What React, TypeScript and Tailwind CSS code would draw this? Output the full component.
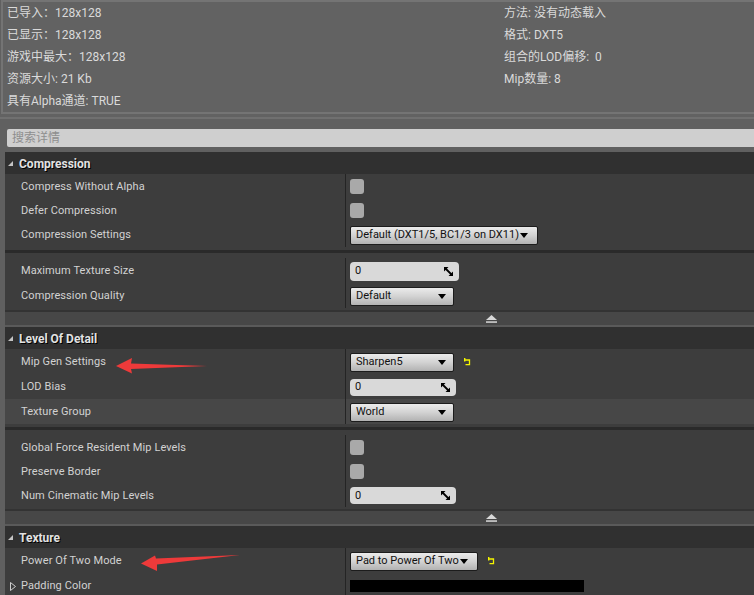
import React from "react";

const FONT = "font-['Roboto','Noto_Sans_CJK_SC',sans-serif]";

function HeaderTri() {
  return (
    <svg width="5" height="5" viewBox="0 0 5 5">
      <polygon points="5,0 5,5 0,5" fill="#c4c4c4" />
    </svg>
  );
}

function ComboArrow() {
  return (
    <svg width="8" height="5" viewBox="0 0 8 5">
      <polygon points="0,0 8,0 4,5" fill="#000" />
    </svg>
  );
}

function SpinIcon() {
  return (
    <svg width="9" height="9" viewBox="0 0 9 9">
      <path d="M0 0H4.5L0 4.5Z M9 9H4.5L9 4.5Z" fill="#000" />
      <path d="M1 1L8 8" stroke="#000" strokeWidth="1.8" />
    </svg>
  );
}

function ResetArrow() {
  return (
    <svg width="8" height="8" viewBox="0 0 8 8">
      <path d="M1.5 2H6.5V6.6H2.5" stroke="#f4f400" strokeWidth="1.3" fill="none" />
      <path d="M1 0V3.5H2.4V0Z" fill="#f4f400" />
    </svg>
  );
}

function Checkbox() {
  return <div className="h-[15px] w-[14px] rounded-[3px] bg-[#a9a9a9]" />;
}

function Combo({ text, w, fill }: { text: string; w: string; fill?: boolean }) {
  return (
    <div
      className={`flex h-[19px] items-center rounded-[2px] border border-[#1c1c1c] bg-linear-to-b from-[#ebebeb] via-[#d2d2d2] to-[#b2b2b2] pl-[5px] text-[11px] text-[#111] ${
        fill ? "gap-[1px] pr-[3px]" : "justify-between pr-[7px]"
      } ${w}`}
    >
      <span className="whitespace-nowrap pt-[1px]">{text}</span>
      <ComboArrow />
    </div>
  );
}

function NumBox({ w, h }: { w: string; h: string }) {
  return (
    <div className={`flex items-center justify-between rounded-[4px] bg-[#d9d9d9] pl-[5px] pr-[6px] text-[11px] text-[#111] ${w} ${h}`}>
      <span className="pt-[1px]">0</span>
      <SpinIcon />
    </div>
  );
}

function Row({
  label,
  h = "h-[24px]",
  hover,
  expand,
  children,
}: {
  label: string;
  h?: string;
  hover?: boolean;
  expand?: boolean;
  children?: React.ReactNode;
}) {
  return (
    <div className={`flex ${h} ${hover ? "bg-[#474747]" : ""}`}>
      <div className="relative flex w-[340px] items-center pl-[16px] pt-[2px] text-[11px] tracking-[0.1px] text-[#d2d2d2]">
        {expand && (
          <svg className="absolute left-[5px] top-[9px]" width="6" height="9" viewBox="0 0 6 9">
            <polygon points="0.5,0.5 5.5,4.5 0.5,8.5" fill="none" stroke="#cfcfcf" strokeWidth="1" />
          </svg>
        )}
        {label}
      </div>
      <div className="flex flex-1 items-center gap-[9px] border-l border-[#242424] pl-[4px] pt-[1px]">{children}</div>
    </div>
  );
}

function Header({ title }: { title: string }) {
  return (
    <div className="flex h-[22px] items-center gap-[6px] bg-[#303030] pl-[3px]">
      <HeaderTri />
      <span className="pt-[1px] text-[12px] font-bold text-[#e2e2e2] [text-shadow:1px_1px_0_#000]">{title}</span>
    </div>
  );
}

function GroupGap() {
  return (
    <div className="pt-[3px] pb-[5px]">
      <div className="h-[3px] bg-[#2a2a2a]" />
    </div>
  );
}

function Expander() {
  return (
    <div className="pt-[2px]">
      <div className="h-[2px] bg-[#333]" />
      <div className="flex h-[13px] items-center justify-center bg-[#474747]">
        <svg width="11" height="8" viewBox="0 0 11 8">
          <polygon points="5.5,0 11,5 0,5" fill="#d8d8d8" />
          <rect x="0" y="6.3" width="11" height="1.5" fill="#d8d8d8" />
        </svg>
      </div>
      <div className="h-[2px] bg-[#5a5a5a]" />
    </div>
  );
}

export default function App() {
  const leftInfo = ["已导入：128x128", "已显示：128x128", "游戏中最大：128x128", "资源大小: 21 Kb", "具有Alpha通道: TRUE"];
  const rightInfo = ["方法: 没有动态载入", "格式: DXT5", "组合的LOD偏移:  0", "Mip数量: 8"];

  return (
    <div className={`relative h-[595px] w-[754px] overflow-hidden bg-[#606060] ${FONT}`}>
      <div className="w-[977px]">
        {/* asset info */}
        <div className="ml-[1px] grid grid-cols-[497px_1fr] border-t-2 border-b-2 border-l-2 border-[#747474] bg-[#626262] pl-[4px] text-[12px] leading-[22px] text-[#dadada]">
          <div>
            {leftInfo.map((t) => (
              <div key={t}>{t}</div>
            ))}
          </div>
          <div>
            {rightInfo.map((t) => (
              <div key={t} className="whitespace-pre">{t}</div>
            ))}
          </div>
        </div>

        <div className="h-[3px] bg-[#626262]" />

        <div className="border-t-2 border-[#707070] pt-[10px]">
          <div className="ml-[7px] flex h-[18px] items-center rounded-[2px] bg-[#cfcfcf] pl-[5px] text-[12px] text-[#8e8e8e]">
            搜索详情
          </div>

          <div className="ml-[5px] mt-[5px] bg-[#3d3d3d]">
            <Header title="Compression" />
            <Row label="Compress Without Alpha">
              <Checkbox />
            </Row>
            <Row label="Defer Compression">
              <Checkbox />
            </Row>
            <Row label="Compression Settings" h="h-[25px]">
              <Combo text="Default (DXT1/5, BC1/3 on DX11)" w="w-[188px]" fill />
            </Row>
            <GroupGap />
            <Row label="Maximum Texture Size" h="h-[25px]">
              <NumBox w="w-[109px]" h="h-[19px]" />
            </Row>
            <Row label="Compression Quality" h="h-[25px]">
              <Combo text="Default" w="w-[104px]" />
            </Row>
            <Expander />

            <Header title="Level Of Detail" />
            <Row label="Mip Gen Settings" h="h-[25px]">
              <Combo text="Sharpen5" w="w-[104px]" />
              <ResetArrow />
            </Row>
            <Row label="LOD Bias" h="h-[25px]">
              <NumBox w="w-[106px]" h="h-[17px]" />
            </Row>
            <Row label="Texture Group" h="h-[25px]" hover>
              <Combo text="World" w="w-[104px]" />
            </Row>
            <GroupGap />
            <Row label="Global Force Resident Mip Levels">
              <Checkbox />
            </Row>
            <Row label="Preserve Border">
              <Checkbox />
            </Row>
            <Row label="Num Cinematic Mip Levels">
              <NumBox w="w-[106px]" h="h-[17px]" />
            </Row>
            <Expander />

            <Header title="Texture" />
            <Row label="Power Of Two Mode" h="h-[25px]">
              <Combo text="Pad to Power Of Two" w="w-[128px]" fill />
              <ResetArrow />
            </Row>
            <Row label="Padding Color" h="h-[25px]" expand>
              <div className="h-[12px] w-[234px] bg-black" />
            </Row>
          </div>
        </div>
      </div>

      {/* annotation arrows */}
      <svg className="pointer-events-none absolute left-0 top-0" width="754" height="595" viewBox="0 0 754 595">
        <polygon points="116,366 132,358 131,363.5 207,366 131,369 132,373.5" fill="#ee3a3a" />
        <polygon points="141,563.5 155,555.5 156,558.5 240,555 157,564.5 157,571" fill="#ee3a3a" />
      </svg>
    </div>
  );
}
